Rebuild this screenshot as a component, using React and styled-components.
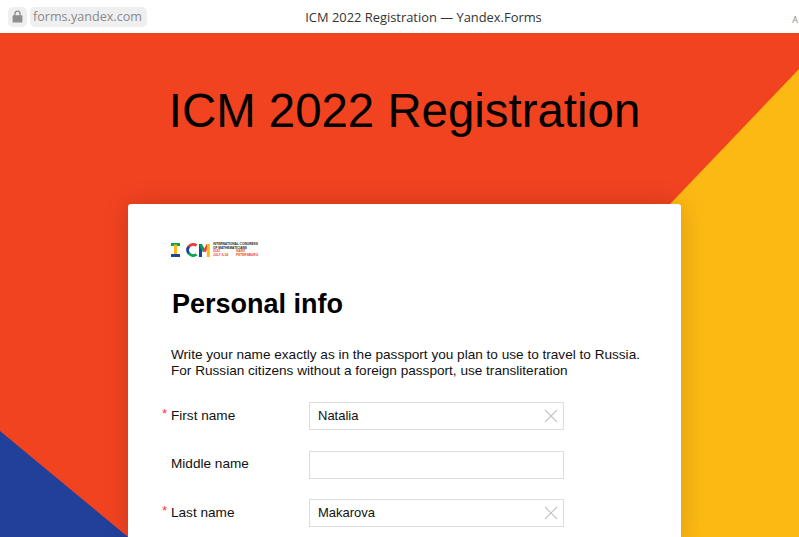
import styled, { createGlobalStyle } from "styled-components";

const Global = createGlobalStyle`
  html, body {
    margin: 0;
    padding: 0;
    height: 100%;
    overflow: hidden;
    background: #ffffff;
    font-family: "Liberation Sans", Arial, sans-serif;
  }
`;

const Page = styled.div`
  width: 799px;
  height: 537px;
  overflow: hidden;
  display: flex;
  flex-direction: column;
`;

const BrowserBar = styled.header`
  height: 33px;
  flex: none;
  background: #ffffff;
  display: grid;
  grid-template-columns: 1fr auto 1fr;
  align-items: center;
  padding: 0 0 0 8px;
  box-sizing: border-box;
`;

const Address = styled.div`
  display: flex;
  align-items: center;
  gap: 3px;
`;

const LockBox = styled.div`
  width: 19px;
  height: 20px;
  border-radius: 5px;
  background: #efefef;
  display: flex;
  align-items: center;
  justify-content: center;
`;

const Url = styled.div`
  height: 20px;
  padding: 0 5px 0 3px;
  border-radius: 5px;
  background: #efefef;
  color: #8a8a8a;
  font-family: "Open Sans", sans-serif;
  font-size: 12.6px;
  line-height: 20px;
`;

const PageTitle = styled.div`
  margin-left: 40px;
  color: #333333;
  font-family: "Open Sans", sans-serif;
  font-size: 12.9px;
`;

const Overflow = styled.div`
  justify-self: end;
  color: #8c8c8c;
  font-family: "Open Sans", sans-serif;
  font-size: 9px;
  padding-top: 6px;
  margin-right: 1px;
`;

const Hero = styled.main`
  position: relative;
  flex: 1;
  box-sizing: border-box;
  padding-left: 10px;
  background: #f24321;
  overflow: hidden;
  display: flex;
  flex-direction: column;
  align-items: center;

  &::before {
    content: "";
    position: absolute;
    inset: 0;
    background: #fdb913;
    clip-path: polygon(799px 36px, 799px 504px, 352px 504px);
  }

  &::after {
    content: "";
    position: absolute;
    inset: 0;
    background: #21409a;
    clip-path: polygon(0 398px, 128px 504px, 0 504px);
  }
`;

const Title = styled.h1`
  position: relative;
  z-index: 1;
  flex: none;
  margin: 48px 0 0;
  height: 123px;
  color: #000000;
  font-weight: 400;
  font-size: 47.4px;
  line-height: 60px;
`;

const Card = styled.section`
  position: relative;
  z-index: 1;
  box-sizing: border-box;
  width: 553px;
  flex: none;
  height: 340px;
  padding: 37px 30px 0 43px;
  background: #ffffff;
  border-radius: 3px 3px 0 0;
  box-shadow: 0 0 26px rgba(0, 0, 0, 0.16);
`;

const Logo = styled.div`
  display: flex;
  align-items: center;
  gap: 3px;
  height: 18px;
`;

const LogoText = styled.div`
  display: flex;
  flex-direction: column;
  font-size: 3.2px;
  line-height: 3.5px;
  font-weight: 700;
  color: #222222;
`;

const LogoRow = styled.div`
  display: grid;
  grid-template-columns: 23px auto;
  color: #ef3e33;
`;

const Heading = styled.h2`
  margin: 28px 0 0 1px;
  color: #000000;
  font-size: 27px;
  line-height: 34px;
  font-weight: 700;
`;

const Intro = styled.p`
  margin: 26px 0 0;
  color: #111111;
  font-size: 13.6px;
  line-height: 16px;
  white-space: nowrap;
`;

const Fields = styled.div`
  display: flex;
  flex-direction: column;
  gap: 20.5px;
  margin-top: 23px;
`;

const Row = styled.div`
  display: grid;
  grid-template-columns: 138px 255px;
  align-items: center;
`;

const Label = styled.label`
  position: relative;
  top: -1px;
  color: #111111;
  font-size: 13.6px;
`;

const Star = styled.span`
  position: absolute;
  left: -9px;
  top: -2px;
  color: #f33;
  font-size: 13px;
`;

const InputBox = styled.div`
  box-sizing: border-box;
  height: 28px;
  display: flex;
  align-items: center;
  justify-content: space-between;
  padding: 0 5px 1px 8px;
  border: 1px solid #dcdcdc;
  color: #111111;
  font-size: 13px;
`;

const Clear = () => (
  <svg width="14" height="14" viewBox="0 0 14 14" fill="none" stroke="#c4c4c4" strokeWidth="1.1">
    <path d="M1 1l12 12M13 1L1 13" />
  </svg>
);

const Lock = () => (
  <svg width="11" height="13" viewBox="0 0 11 13" fill="#8e8e8e">
    <path d="M2.3 5.2V3.7a3.2 3.2 0 0 1 6.4 0v1.5h.8c.5 0 .9.4.9.9v5.6c0 .5-.4.9-.9.9h-8c-.5 0-.9-.4-.9-.9V6.100c0-.5.4-.9.9-.9zm1.300 0h3.800V3.700a1.900 1.900 0 0 0-3.800 0z" />
  </svg>
);

const IcmMark = () => (
  <svg width="39" height="14" viewBox="0 0 39 14" fill="none" strokeWidth="3">
    <path d="M0 1.500h9" stroke="#00a651" />
    <path d="M4.500 1.500v11" stroke="#fdb913" />
    <path d="M0 12.500h9" stroke="#21409a" />
    <path d="M25.500 2.600a5.600 5.600 0 0 0-7.500 .8" stroke="#ef3e33" />
    <path d="M18 3.400a5.400 5.400 0 0 0 0 7.200" stroke="#21409a" />
    <path d="M18 10.600a5.600 5.600 0 0 0 7.500 .8" stroke="#00a651" />
    <path d="M29.500 14V1" stroke="#21409a" />
    <path d="M29.500 1.500l3.800 7" stroke="#00a651" />
    <path d="M33.300 8.500l3.800-7" stroke="#ef3e33" />
    <path d="M37.300 1V14" stroke="#fdb913" />
  </svg>
);

const fields = [
  { label: "First name", value: "Natalia", required: true },
  { label: "Middle name", value: "", required: false },
  { label: "Last name", value: "Makarova", required: true },
];

export default function App() {
  return (
    <Page>
      <Global />
      <BrowserBar>
        <Address>
          <LockBox>
            <Lock />
          </LockBox>
          <Url>forms.yandex.com</Url>
        </Address>
        <PageTitle>ICM 2022 Registration — Yandex.Forms</PageTitle>
        <Overflow>A</Overflow>
      </BrowserBar>
      <Hero>
        <Title>ICM 2022 Registration</Title>
        <Card>
          <Logo>
            <IcmMark />
            <LogoText>
              <span>INTERNATIONAL CONGRESS</span>
              <span>OF MATHEMATICIANS</span>
              <LogoRow>
                <span>2022</span>
                <span>SAINT</span>
              </LogoRow>
              <LogoRow>
                <span>JULY 6-14</span>
                <span>PETERSBURG</span>
              </LogoRow>
            </LogoText>
          </Logo>
          <Heading>Personal info</Heading>
          <Intro>
            Write your name exactly as in the passport you plan to use to travel to Russia.
            <br />
            For Russian citizens without a foreign passport, use transliteration
          </Intro>
          <Fields>
            {fields.map((f) => (
              <Row key={f.label}>
                <Label>
                  {f.required && <Star>*</Star>}
                  {f.label}
                </Label>
                <InputBox>
                  <span>{f.value}</span>
                  {f.value && <Clear />}
                </InputBox>
              </Row>
            ))}
          </Fields>
        </Card>
      </Hero>
    </Page>
  );
}
